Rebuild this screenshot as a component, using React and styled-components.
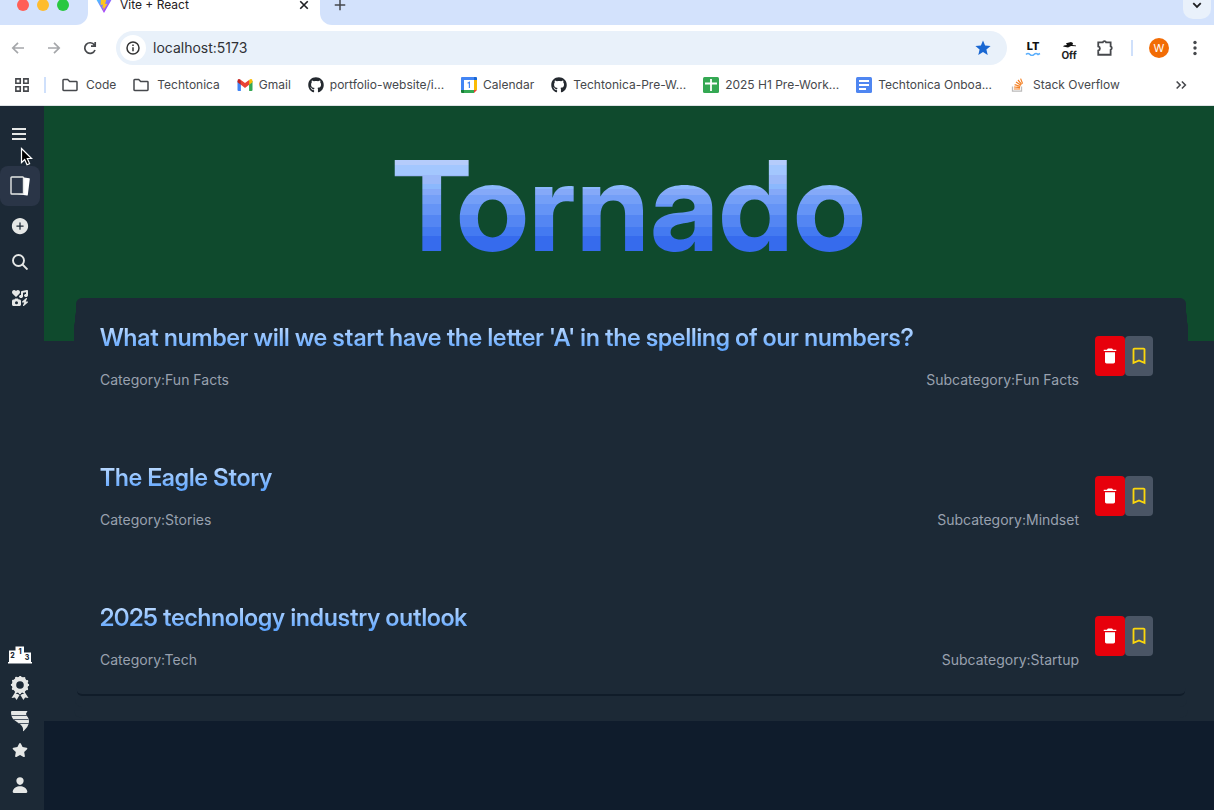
import React from 'react';
import styled, { createGlobalStyle } from 'styled-components';
import { FaIcons, FaStar } from 'react-icons/fa6';
import { IoMdTrash } from 'react-icons/io';
import { IoPerson, IoAddCircle } from 'react-icons/io5';
import { FaGithub } from 'react-icons/fa';
import { MdBookmarkBorder } from 'react-icons/md';

const ink = '#46484c';
const panel = '#1c2936';

const GlobalStyle = createGlobalStyle`
  * { box-sizing: border-box; }
  body {
    margin: 0;
    font-family: Inter, "Liberation Sans", sans-serif;
    background: #0f1c2c;
  }
  button, input { font: inherit; }
  svg { display: block; flex: none; }
`;

const Page = styled.div`
  display: flex;
  flex-direction: column;
  min-height: 100vh;
  overflow: hidden;
`;

const BareButton = styled.button`
  display: flex;
  align-items: center;
  justify-content: center;
  flex: none;
  padding: 0;
  border: 0;
  background: none;
  color: inherit;
  cursor: pointer;
`;

/* Browser tab strip */
const TabStrip = styled.div`
  display: flex;
  height: 41px;
  margin-top: -16px;
  background: #fff;
`;
const WindowControls = styled.div`
  display: flex;
  align-items: center;
  gap: 8px;
  width: 88px;
  padding-left: 17px;
  background: #d3e2fc;
  border-radius: 0 0 12px 0;
`;
const Light = styled.button`
  width: 12px;
  height: 12px;
  padding: 0;
  border: 0;
  border-radius: 50%;
  background: ${(p) => p.$color};
`;
const Tab = styled.div`
  display: flex;
  align-items: center;
  gap: 8px;
  width: 232px;
  padding: 0 10px 0 8px;
  font-size: 12px;
  line-height: 16px;
  color: #1f2023;
`;
const TabTitle = styled.span`
  flex: 1;
`;
const StripRest = styled.div`
  display: flex;
  flex: 1;
  align-items: center;
  justify-content: space-between;
  padding: 0 3px 0 14px;
  background: #d3e2fc;
  border-radius: 0 0 0 12px;
  color: ${ink};
`;
const TabSearch = styled(BareButton)`
  width: 28px;
  height: 28px;
  border-radius: 10px;
  background: #e9f1fb;
  color: #1f2023;
`;

/* Browser toolbar */
const Toolbar = styled.div`
  display: flex;
  align-items: center;
  height: 41px;
  padding: 5px 1px 0 0;
  background: #fff;
  color: ${ink};
`;
const ToolButton = styled(BareButton)`
  width: 36px;
  height: 34px;
  color: ${(p) => (p.$dim ? '#a5a7aa' : ink)};
`;
const ToolStack = styled(ToolButton)`
  flex-direction: column;
  gap: 1px;
`;
const AddressBar = styled.label`
  display: flex;
  flex: 1;
  align-items: center;
  gap: 7px;
  height: 34px;
  margin: 0 8px;
  padding: 0 16px 0 4px;
  border-radius: 17px;
  background: #e9f1fa;
`;
const SiteInfo = styled(BareButton)`
  width: 26px;
  height: 26px;
  border-radius: 50%;
  background: #fff;
  color: #333;
`;
const AddressInput = styled.input`
  flex: 1;
  min-width: 0;
  padding: 0;
  border: 0;
  outline: 0;
  background: none;
  color: #303236;
  font-size: 14px;
  line-height: 20px;
`;
const Divider = styled.span`
  flex: none;
  width: 2px;
  height: 16px;
  margin: ${(p) => p.$margin};
  background: #cfe0fb;
`;
const Avatar = styled.span`
  width: 20px;
  height: 20px;
  border-radius: 50%;
  background: #f26c05;
  color: #fff;
  font-size: 11px;
  line-height: 20px;
  text-align: center;
`;
const LtMark = styled.span`
  font-size: 11px;
  line-height: 10px;
  font-weight: 800;
  color: #111;
`;
const OffMark = styled.span`
  font-size: 10px;
  line-height: 12px;
  font-weight: 700;
  color: #222;
`;
const OffButton = styled(ToolStack)`
  padding-top: 6px;
`;

/* Bookmarks bar */
const BookmarksBar = styled.nav`
  display: flex;
  align-items: center;
  height: 40px;
  padding: 0 26px 2px 15px;
  background: #fff;
  border-bottom: 1px solid #dfe3e6;
  color: ${ink};
`;
const BookmarkList = styled.div`
  display: flex;
  flex: 1;
  gap: 17px;
  min-width: 0;
`;
const Bookmark = styled.a`
  display: flex;
  flex: none;
  align-items: center;
  gap: ${(p) => (p.$folder ? 8 : 6)}px;
  color: ${ink};
  font-size: 12px;
  line-height: 16px;
  text-decoration: none;
  white-space: nowrap;
`;

/* App */
const AppShell = styled.div`
  display: flex;
  flex: 1;
`;
const Sidebar = styled.aside`
  position: relative;
  display: flex;
  flex: none;
  flex-direction: column;
  justify-content: space-between;
  width: 44px;
  padding: 10px 4px 7px 0;
  background: ${panel};
  color: #e5e7e6;
`;
const NavGroup = styled.nav`
  display: flex;
  flex-direction: column;
`;
const NavButton = styled(BareButton)`
  width: 40px;
  height: ${(p) => p.$height || 36}px;
  margin-bottom: ${(p) => p.$after || 0}px;
  border-radius: 8px;
  background: ${(p) => (p.$active ? '#2a3547' : 'transparent')};
`;
const Pointer = styled.svg`
  position: absolute;
  left: 20px;
  top: 41px;
`;
const Main = styled.main`
  flex: 1;
  min-width: 0;
`;
const Hero = styled.header`
  height: 235px;
  padding-top: 22px;
  background: #0f4a2d;
  text-align: center;
`;
const HeroTitle = styled.h1`
  display: inline-block;
  margin: 0;
  font-family: "Inter Display", Inter, "Liberation Sans", sans-serif;
  font-size: 125px;
  line-height: 155px;
  font-weight: 700;
  color: transparent;
  background: linear-gradient(#b5ccfb 0 37px, #a3c7fe 37px 47px, #9bb9f9 47px 56px, #8bb8fd 56px 61px,
    #85a9f8 61px 67px, #749ff7 67px 76px, #6594f6 76px 87px, #5486f3 87px 99px, #447af1 99px 108px, #366bed 108px);
  background-clip: text;
`;
const Board = styled.section`
  display: flex;
  flex-direction: column;
  padding: 0 28px 27px 32px;
  background: ${panel};
`;
const Card = styled.ul`
  display: flex;
  flex-direction: column;
  gap: 72px;
  margin: -43px 0 0;
  padding: 24px 33px 24px 24px;
  list-style: none;
  border-radius: 6px;
  background: ${panel};
  box-shadow: 0 3px 0 -1px #101c29, 0 12px 0 1px ${panel}, 0 22px 0 2px ${panel};
`;
const Item = styled.li`
  display: flex;
  align-items: center;
  gap: 16px;
`;
const ItemBody = styled.div`
  flex: 1;
`;
const ItemTitle = styled.h2`
  width: fit-content;
  margin: 0 0 16px;
  font-family: "Inter Display", Inter, "Liberation Sans", sans-serif;
  font-size: 24px;
  line-height: 32px;
  font-weight: 600;
  color: transparent;
  background: linear-gradient(#bedbff 4px, #5ea5ff 28px);
  background-clip: text;
`;
const ItemMeta = styled.div`
  display: flex;
  justify-content: space-between;
  color: #99a1af;
  font-size: 14px;
  line-height: 20px;
`;
const Actions = styled.div`
  display: flex;
`;
const ActionButton = styled(BareButton)`
  width: ${(p) => (p.$danger ? 30 : 28)}px;
  height: 40px;
  border-radius: 4px;
  background: ${(p) => (p.$danger ? '#e7000b' : '#4a5565')};
  color: ${(p) => (p.$danger ? '#fff' : '#fcd70c')};
`;

const Stroke = ({ size = 16, w = 2, children, ...rest }) => (
  <svg width={size} height={size} viewBox="0 0 16 16" fill="none" stroke="currentColor" strokeWidth={w} {...rest}>
    {children}
  </svg>
);

const ViteLogo = () => (
  <svg width="16" height="16" viewBox="0 0 16 16">
    <defs>
      <linearGradient id="vite" x1="0" y1="0" x2="1" y2="1">
        <stop offset="0" stopColor="#41d1ff" />
        <stop offset="0.7" stopColor="#a545fe" />
        <stop offset="1" stopColor="#bd34fe" />
      </linearGradient>
    </defs>
    <path d="M0 2l8 1 8-1-8 14z" fill="url(#vite)" />
    <path d="M11 0L5 1l-.4 7 2.4-.5-.8 3.5 1.6-.4L7 14l4.5-7.3-2.4.4z" fill="#ffc51d" />
  </svg>
);
const Folder = () => (
  <Stroke w="1.5">
    <path d="M1 3.2q0-.7.7-.7h4l2 2h6.6q.7 0 .7.7v7.6q0 .7-.7.7H1.7q-.7 0-.7-.7z" />
  </Stroke>
);
const GmailLogo = () => (
  <svg width="16" height="12" viewBox="0 0 15 12">
    <path d="M0 2h3.4v10H1q-1 0-1-1z" fill="#4285f4" />
    <path d="M11.6 2H15v9q0 1-1 1h-2.4z" fill="#34a853" />
    <path d="M11.6 1l1-.7Q15-.5 15 2v1.2l-3.4 2.6z" fill="#fbbc04" />
    <path d="M3.4 1l-1-.7Q0-.5 0 2v1.2l3.4 2.6z" fill="#c5221f" />
    <path d="M3.4 1l4.1 3.1L11.6 1v4.8L7.5 8.9 3.4 5.8z" fill="#ea4335" />
  </svg>
);
const CalendarLogo = () => (
  <svg width="16" height="16" viewBox="0 0 16 16">
    <path d="M0 1q0-1 1-1h12v3H3v10H0z" fill="#4285f4" />
    <path d="M13 0h2q1 0 1 1v2h-3z" fill="#1967d2" />
    <path d="M13 3h3v10h-3z" fill="#fbbc04" />
    <path d="M3 13h10v3H3z" fill="#34a853" />
    <path d="M0 13h3v3H1q-1 0-1-1z" fill="#188038" />
    <path d="M13 13h3l-3 3z" fill="#ea4335" />
    <path d="M3 3h10v10H3z" fill="#fff" />
    <path d="M6.6 6.2l1.8-1V11" fill="none" stroke="#4285f4" strokeWidth="1.2" />
  </svg>
);
const SheetLogo = () => (
  <svg width="16" height="16" viewBox="0 0 16 16">
    <rect width="16" height="16" rx="1.5" fill="#34a853" />
    <path d="M8 2v12M2 6.5h12" stroke="#fff" strokeWidth="1.8" />
  </svg>
);
const DocLogo = () => (
  <svg width="16" height="16" viewBox="0 0 16 16">
    <rect width="16" height="16" rx="1.5" fill="#4f86f1" />
    <path d="M3 4h10M3 8h10M3 12h7" stroke="#fff" strokeWidth="1.8" />
  </svg>
);
const StackLogo = () => (
  <svg width="18" height="14" viewBox="-2 0 18 14" fill="none">
    <path d="M1.5 8.5v4.6h9V8.5" stroke="#bcbbbb" strokeWidth="1.3" />
    <path d="M3 11h6M3 9l6 .6M3.6 6.6l5.7 1.8M5 4l5 3.3M7 2l3.6 4.4M9.6.6l2 5" stroke="#f48024" strokeWidth="1.2" />
  </svg>
);
const CardsIcon = () => (
  <svg width="22" height="22" viewBox="0 0 22 22">
    <path d="M13.5 2.2l6.8 1q.6.1.5.7l-2 16q-.1.8-.9.7L8 19z" fill="#fff" />
    <rect x="2" y="2" width="12.5" height="17" rx="0.8" fill="#2a3547" stroke="#e5e7e6" strokeWidth="1.4" />
  </svg>
);
const PodiumIcon = () => (
  <svg width="24" height="18" viewBox="0 0 24 18" fontFamily="Inter, sans-serif" fontSize="7" fontWeight="800" textAnchor="middle">
    <path d="M1 4.5h6.500V.5h8.500v6H23V16h1v1.500H0V16h1z" fill="#fff" />
    <g fill={panel}>
      <text x="4.500" y="12">2</text>
      <text x="12" y="8">1</text>
      <text x="19" y="14">3</text>
    </g>
  </svg>
);
const MedalIcon = () => (
  <svg width="20" height="24" viewBox="0 0 20 24" fill="currentColor">
    <path d="M5 16.5L1.5 22l3.4-.4 1.7 2.4 3-5zM15 16.5l3.5 5.5-3.4-.4-1.7 2.4-3-5z" />
    <circle cx="10" cy="9" r="7.7" stroke={panel} strokeWidth="3" />
    <circle cx="10" cy="9" r="6" fill="none" stroke="currentColor" strokeWidth="4.4" />
    <circle cx="10" cy="9" r="8" fill="none" stroke="currentColor" strokeWidth="2.4" strokeDasharray="0 4.189" strokeLinecap="round" />
    <circle cx="10" cy="9" r="3.8" fill={panel} />
  </svg>
);
const TornadoIcon = () => (
  <svg width="20" height="22" viewBox="0 0 20 22">
    <path d="M1.5 1h16l-1.5 2.8q0 1.5 1.7 3.2 1.3 1.7 1.3 4.5 0 2.5-1.8 5.5l-3.5 4q-.7.4-.7-.4.6-3.2-2.5-6L3.5 9.5Q1 7 1 2z" fill="#e5e7e6" />
    <path d="M1 5.5h16M3 9.5h15.5M8.5 13.5h10.5" stroke="#4d5764" strokeWidth="1.2" />
  </svg>
);

const bookmarks = [
  { label: 'Code', icon: <Folder />, folder: true },
  { label: 'Techtonica', icon: <Folder />, folder: true },
  { label: 'Gmail', icon: <GmailLogo /> },
  { label: 'portfolio-website/i...', icon: <FaGithub size={16} color="#24292f" /> },
  { label: 'Calendar', icon: <CalendarLogo /> },
  { label: 'Techtonica-Pre-W...', icon: <FaGithub size={16} color="#24292f" /> },
  { label: '2025 H1 Pre-Work...', icon: <SheetLogo /> },
  { label: 'Techtonica Onboa...', icon: <DocLogo /> },
  { label: 'Stack Overflow', icon: <StackLogo /> },
];

const posts = [
  { title: "What number will we start have the letter 'A' in the spelling of our numbers?", category: 'Fun Facts', sub: 'Fun Facts' },
  { title: 'The Eagle Story', category: 'Stories', sub: 'Mindset' },
  { title: '2025 technology industry outlook', category: 'Tech', sub: 'Startup' },
];

function BrowserChrome() {
  return (
    <>
      <TabStrip>
        <WindowControls>
          <Light $color="#ff5f57" aria-label="Close window" />
          <Light $color="#febc2e" aria-label="Minimize window" />
          <Light $color="#28c840" aria-label="Zoom window" />
        </WindowControls>
        <Tab>
          <ViteLogo />
          <TabTitle>Vite + React</TabTitle>
          <BareButton aria-label="Close tab">
            <Stroke size={12} w="2.2"><path d="M3 3l10 10M13 3L3 13" /></Stroke>
          </BareButton>
        </Tab>
        <StripRest>
          <BareButton aria-label="New tab">
            <Stroke size={12}><path d="M8 1v14M1 8h14" /></Stroke>
          </BareButton>
          <TabSearch aria-label="Search tabs">
            <Stroke size={12} w="2.4"><path d="M3 5.5l5 5 5-5" /></Stroke>
          </TabSearch>
        </StripRest>
      </TabStrip>
      <Toolbar>
        <ToolButton $dim aria-label="Back">
          <Stroke w="1.7"><path d="M14 8H3M8 2.8L2.8 8 8 13.2" /></Stroke>
        </ToolButton>
        <ToolButton $dim aria-label="Forward">
          <Stroke w="1.7"><path d="M2 8h11M8 2.8L13.2 8 8 13.2" /></Stroke>
        </ToolButton>
        <ToolButton aria-label="Reload">
          <Stroke w="1.7"><path d="M13 10A5.3 5.3 0 1 1 12.4 5M13.2 2v4.2H9" /></Stroke>
        </ToolButton>
        <AddressBar>
          <SiteInfo aria-label="Site information">
            <Stroke size={16} w="1.5">
              <circle cx="8" cy="8" r="6" />
              <path d="M8 7.2v4M8 4.4v1.6" />
            </Stroke>
          </SiteInfo>
          <AddressInput aria-label="Address" defaultValue="localhost:5173" />
          <BareButton aria-label="Bookmark this page">
            <svg width="16" height="16" viewBox="0 0 16 16" fill="#1967d2">
              <path d="M8 .5l2.1 5 5.5.5-4.2 3.6 1.3 5.4L8 12.1 3.3 15l1.3-5.4L.4 6l5.5-.5z" />
            </svg>
          </BareButton>
        </AddressBar>
        <ToolStack aria-label="LanguageTool">
          <LtMark>LT</LtMark>
          <svg width="16" height="4" viewBox="0 0 16 4" fill="none" stroke="#5aaefc" strokeWidth="1.6">
            <path d="M1 2.5q2-2 4 0t4 0 4 0l2-1" />
          </svg>
        </ToolStack>
        <OffButton aria-label="Extension off">
          <svg width="16" height="6" viewBox="0 0 16 6" fill="#111">
            <path d="M5 1.200L10 0l2 1-.5 2 3.500.5v.8L10 4l-3 1.500L2 4.500l1-1 3-.5z" />
          </svg>
          <OffMark>Off</OffMark>
        </OffButton>
        <ToolButton aria-label="Extensions">
          <Stroke size={18} w="1.6">
            <path d="M2 3h4a1.6 1.6 0 0 1 3 0H13v3.6a1.6 1.6 0 0 1 0 3V14H2v-3.700a1.900 1.900 0 0 0 0-3.700z" />
          </Stroke>
        </ToolButton>
        <Divider $margin="0 8px" />
        <ToolButton aria-label="Profile"><Avatar>W</Avatar></ToolButton>
        <ToolButton aria-label="Menu">
          <svg width="16" height="16" viewBox="0 0 16 16" fill="currentColor">
            <circle cx="8" cy="2.5" r="1.7" /><circle cx="8" cy="8" r="1.7" /><circle cx="8" cy="13.5" r="1.7" />
          </svg>
        </ToolButton>
      </Toolbar>
      <BookmarksBar aria-label="Bookmarks">
        <BareButton aria-label="Apps">
          <Stroke size={14} w="1.8"><path d="M1 1h5v5H1zM10 1h5v5h-5zM1 10h5v5H1zM10 10h5v5h-5z" /></Stroke>
        </BareButton>
        <Divider $margin="0 16px 0 15px" />
        <BookmarkList>
          {bookmarks.map((b) => (
            <Bookmark key={b.label} href="#" $folder={b.folder}>{b.icon}{b.label}</Bookmark>
          ))}
        </BookmarkList>
        <BareButton aria-label="More bookmarks">
          <Stroke size={14} w="1.8"><path d="M3 4l4 4-4 4M9 4l4 4-4 4" /></Stroke>
        </BareButton>
      </BookmarksBar>
    </>
  );
}

export default function App() {
  return (
    <Page>
      <GlobalStyle />
      <BrowserChrome />
      <AppShell>
        <Sidebar>
          <NavGroup aria-label="Primary">
            <NavButton aria-label="Toggle menu" $after={14}>
              <Stroke w="2"><path d="M0 3h14M0 8h14M0 13h14" /></Stroke>
            </NavButton>
            <NavButton $active $height={40} $after={2} aria-label="Cards"><CardsIcon /></NavButton>
            <NavButton aria-label="Add"><IoAddCircle size={20} /></NavButton>
            <NavButton aria-label="Search">
              <Stroke w="1.9"><circle cx="6.5" cy="6.5" r="5.5" /><path d="M10.5 10.5l5 5" /></Stroke>
            </NavButton>
            <NavButton aria-label="Categories"><FaIcons size={16} /></NavButton>
          </NavGroup>
          <NavGroup aria-label="Secondary">
            <NavButton $height={32} aria-label="Ranking"><PodiumIcon /></NavButton>
            <NavButton $height={34} aria-label="Awards"><MedalIcon /></NavButton>
            <NavButton $height={32} aria-label="Tornado"><TornadoIcon /></NavButton>
            <NavButton $height={26} $after={4} aria-label="Favorites"><FaStar size={16} /></NavButton>
            <NavButton aria-label="Profile"><IoPerson size={18} /></NavButton>
          </NavGroup>
          <Pointer width="13" height="20" viewBox="0 0 13 20">
            <path d="M1.5 1.5v14l3.2-3 2.3 5.2 2.6-1.1-2.3-5.1h4.3z" fill="#000" stroke="#fff" strokeWidth="1.2" />
          </Pointer>
        </Sidebar>
        <Main>
          <Hero><HeroTitle>Tornado</HeroTitle></Hero>
          <Board>
            <Card>
              {posts.map((p) => (
                <Item key={p.title}>
                  <ItemBody>
                    <ItemTitle>{p.title}</ItemTitle>
                    <ItemMeta><span>Category:{p.category}</span><span>Subcategory:{p.sub}</span></ItemMeta>
                  </ItemBody>
                  <Actions>
                    <ActionButton $danger aria-label="Delete"><IoMdTrash size={20} /></ActionButton>
                    <ActionButton aria-label="Bookmark"><MdBookmarkBorder size={22} /></ActionButton>
                  </Actions>
                </Item>
              ))}
            </Card>
          </Board>
        </Main>
      </AppShell>
    </Page>
  );
}
